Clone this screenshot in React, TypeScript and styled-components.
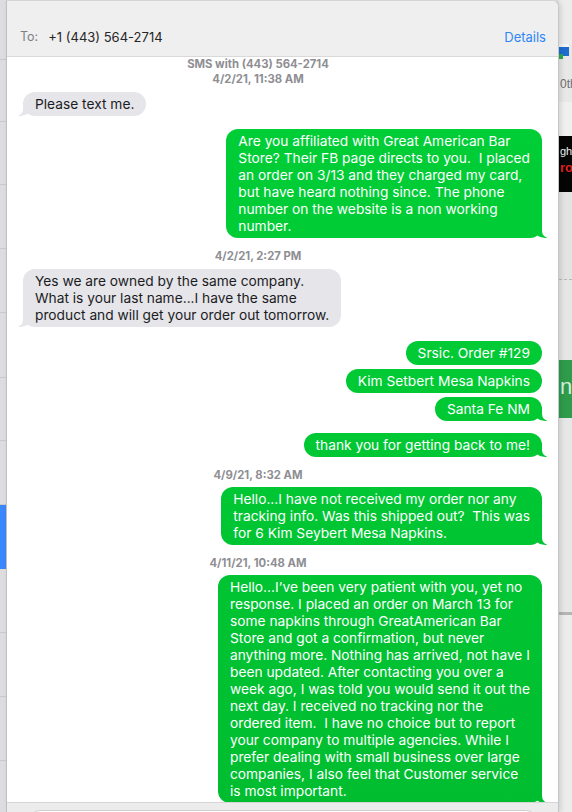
import React from 'react';
import styled, { createGlobalStyle, css } from 'styled-components';

const GlobalStyle = createGlobalStyle`
  html, body {
    margin: 0;
    padding: 0;
    background: #e4e4e6;
  }
  body {
    font-family: Inter, 'Liberation Sans', 'Noto Sans', sans-serif;
    -webkit-font-smoothing: antialiased;
  }
`;

const Screen = styled.div`
  display: flex;
  width: 572px;
  height: 812px;
  overflow: hidden;
`;

const LeftEdge = styled.div`
  width: 6px;
  flex: none;
  display: flex;
  flex-direction: column;
  background: #dddde0;
`;

const LeftCell = styled.div<{ $h: number; $active?: boolean }>`
  height: ${p => p.$h}px;
  flex: none;
  box-sizing: border-box;
  border-bottom: 1px solid ${p => (p.$active ? '#3b87fc' : '#c9c9cc')};
  background: ${p => (p.$active ? '#3b87fc' : 'transparent')};
`;

const Window = styled.div`
  width: 553px;
  flex: none;
  display: flex;
  flex-direction: column;
  box-sizing: border-box;
  background: #ffffff;
  border-left: 1px solid #bfbfc2;
  border-right: 1px solid #c6c6c8;
  border-top: 1px solid #d4d4d4;
  border-top-right-radius: 7px;
  overflow: hidden;
  position: relative;
  z-index: 1;
  box-shadow: 2px 0 5px rgba(0, 0, 0, 0.12);
`;

const Header = styled.div`
  height: 56px;
  flex: none;
  box-sizing: border-box;
  background: #efefef;
  border-bottom: 1px solid #d9d9d9;
  display: flex;
  align-items: flex-end;
  padding: 0 12px 11px 13px;
  font-size: 13px;
  line-height: 16px;
`;

const ToLabel = styled.span`
  color: #7f7f82;
  font-size: 12.5px;
`;

const Recipient = styled.span`
  color: #262626;
  margin-left: 10px;
`;

const DetailsLink = styled.span`
  margin-left: auto;
  color: #2f86f6;
`;

const Messages = styled.div`
  flex: 1;
  min-height: 0;
  overflow: hidden;
  display: flex;
  flex-direction: column;
  padding: 0 16px;
`;

const Stamp = styled.div<{ $top: number; $bottom: number }>`
  margin: ${p => p.$top}px 0 ${p => p.$bottom}px;
  padding-right: 49px;
  text-align: center;
  font-size: 11.3px;
  font-weight: 700;
  line-height: 15px;
  color: #8e8e93;
`;

const Row = styled.div<{ $me?: boolean; $gap: number }>`
  display: flex;
  flex: none;
  justify-content: ${p => (p.$me ? 'flex-end' : 'flex-start')};
  margin-top: ${p => p.$gap}px;
`;

const green = css`
  background: linear-gradient(180deg, #00d037 0%, #00c934 50%, #00bd30 100%) fixed;
`;

const Bubble = styled.div<{ $me?: boolean; $tail?: boolean }>`
  position: relative;
  padding: 4px 12px 3px;
  border-radius: 12px;
  font-size: 13.75px;
  line-height: 17px;
  white-space: pre;
  color: ${p => (p.$me ? '#ffffff' : '#1c1c1e')};
  ${p => (p.$me ? green : css`background: #e5e5ea;`)}

  ${p =>
    p.$tail &&
    (p.$me
      ? css`
          &::before {
            content: '';
            position: absolute;
            bottom: 0;
            right: -5px;
            width: 14px;
            height: 14px;
            background: inherit;
            border-bottom-left-radius: 12px 10px;
          }
          &::after {
            content: '';
            position: absolute;
            bottom: 0;
            right: -16px;
            width: 16px;
            height: 14px;
            background: #ffffff;
            border-bottom-left-radius: 7px;
          }
        `
      : css`
          &::before {
            content: '';
            position: absolute;
            bottom: 0;
            left: -5px;
            width: 14px;
            height: 14px;
            background: #e5e5ea;
            border-bottom-right-radius: 12px 10px;
          }
          &::after {
            content: '';
            position: absolute;
            bottom: 0;
            left: -16px;
            width: 16px;
            height: 14px;
            background: #ffffff;
            border-bottom-right-radius: 7px;
          }
        `)}
`;

const Footer = styled.div`
  height: 10px;
  flex: none;
  box-sizing: border-box;
  background: #ececec;
  border-top: 1px solid #d6d6d6;
  padding: 7px 20px 0 21px;
  overflow: hidden;
`;

const InputField = styled.div`
  height: 24px;
  background: #ffffff;
  border: 1px solid #cfcfcf;
  border-radius: 12px;
`;

const RightEdge = styled.div`
  flex: 1;
  display: flex;
  flex-direction: column;
  background: #e8e8e8;
  overflow: hidden;
  font-family: 'Liberation Sans', sans-serif;
`;

const Block = styled.div<{ $h: number; $bg?: string; $pad?: number }>`
  height: ${p => p.$h}px;
  flex: none;
  box-sizing: border-box;
  padding-top: ${p => p.$pad || 0}px;
  background: ${p => p.$bg || 'transparent'};
  overflow: hidden;
  white-space: nowrap;
`;

const DashedBlock = styled(Block)`
  border-bottom: 1px dashed #b8b8b8;
`;

const EdgeText = styled.div<{ $color: string; $size: number; $bold?: boolean }>`
  color: ${p => p.$color};
  font-size: ${p => p.$size}px;
  font-weight: ${p => (p.$bold ? 700 : 400)};
  line-height: 1.4;
  margin-left: 1px;
`;

type Msg =
  | { kind: 'stamp'; text: string; top: number; bottom: number }
  | { kind: 'bubble'; me?: boolean; tail?: boolean; gap: number; text: string };

const thread: Msg[] = [
  { kind: 'stamp', text: 'SMS with (443) 564-2714\n4/2/21, 11:38 AM', top: 0, bottom: 5 },
  { kind: 'bubble', tail: true, gap: 0, text: 'Please text me.' },
  {
    kind: 'bubble',
    me: true,
    tail: true,
    gap: 13,
    text:
      'Are you affiliated with Great American Bar\nStore? Their FB page directs to you.  I placed\nan order on 3/13 and they charged my card,\nbut have heard nothing since. The phone\nnumber on the website is a non working\nnumber.'
  },
  { kind: 'stamp', text: '4/2/21, 2:27 PM', top: 11, bottom: 5 },
  {
    kind: 'bubble',
    tail: true,
    gap: 0,
    text:
      'Yes we are owned by the same company.\nWhat is your last name...I have the same\nproduct and will get your order out tomorrow.'
  },
  { kind: 'bubble', me: true, gap: 14, text: 'Srsic. Order #129' },
  { kind: 'bubble', me: true, gap: 4, text: 'Kim Setbert Mesa Napkins' },
  { kind: 'bubble', me: true, tail: true, gap: 4, text: 'Santa Fe NM' },
  { kind: 'bubble', me: true, tail: true, gap: 12, text: 'thank you for getting back to me!' },
  { kind: 'stamp', text: '4/9/21, 8:32 AM', top: 11, bottom: 4 },
  {
    kind: 'bubble',
    me: true,
    tail: true,
    gap: 0,
    text:
      'Hello...I have not received my order nor any\ntracking info. Was this shipped out?  This was\nfor 6 Kim Seybert Mesa Napkins.'
  },
  { kind: 'stamp', text: '4/11/21, 10:48 AM', top: 11, bottom: 4 },
  {
    kind: 'bubble',
    me: true,
    tail: true,
    gap: 0,
    text:
      'Hello...I\u2019ve been very patient with you, yet no\nresponse. I placed an order on March 13 for\nsome napkins through GreatAmerican Bar\nStore and got a confirmation, but never\nanything more. Nothing has arrived, not have I\nbeen updated. After contacting you over a\nweek ago, I was told you would send it out the\nnext day. I received no tracking nor the\nordered item.  I have no choice but to report\nyour company to multiple agencies. While I\nprefer dealing with small business over large\ncompanies, I also feel that Customer service\nis most important.'
  }
];

const leftCells = [60, 62, 63, 64, 64, 65, 63, 64];

const AppIcon = () => (
  <svg width="10" height="15" viewBox="0 0 10 15">
    <rect x="0" y="0" width="10" height="4" fill="#f4f4f4" />
    <rect x="0" y="3" width="10" height="9" fill="#1f6cd0" />
    <rect x="0" y="10" width="4" height="5" fill="#2fa84f" />
  </svg>
);

const StampText = ({ text }: { text: string }) => (
  <>
    {text.split('\n').map((line, i) => (
      <div key={i}>{line}</div>
    ))}
  </>
);

const App = () => {
  return (
    <>
      <GlobalStyle />
      <Screen>
        <LeftEdge>
          {leftCells.map((h, i) => (
            <LeftCell key={i} $h={h} />
          ))}
          <LeftCell $h={64} $active />
          <LeftCell $h={64} />
          <LeftCell $h={64} />
          <LeftCell $h={64} />
        </LeftEdge>

        <Window>
          <Header>
            <ToLabel>To:</ToLabel>
            <Recipient>+1 (443) 564-2714</Recipient>
            <DetailsLink>Details</DetailsLink>
          </Header>

          <Messages>
            {thread.map((m, i) =>
              m.kind === 'stamp' ? (
                <Stamp key={i} $top={m.top} $bottom={m.bottom}>
                  <StampText text={m.text} />
                </Stamp>
              ) : (
                <Row key={i} $me={m.me} $gap={m.gap}>
                  <Bubble $me={m.me} $tail={m.tail}>
                    {m.text}
                  </Bubble>
                </Row>
              )
            )}
          </Messages>

          <Footer>
            <InputField />
          </Footer>
        </Window>

        <RightEdge>
          <Block $h={44} $bg="#ececec" />
          <Block $h={18}>
            <AppIcon />
          </Block>
          <Block $h={40} $pad={14}>
            <EdgeText $color="#6e6e6e" $size={12}>0th</EdgeText>
          </Block>
          <Block $h={34} $bg="#f0f0f0" />
          <Block $h={56} $bg="#050505" $pad={8}>
            <EdgeText $color="#f2f2f2" $size={11}>ght</EdgeText>
            <EdgeText $color="#e0201b" $size={13} $bold>ro</EdgeText>
          </Block>
          <DashedBlock $h={88} $bg="#e3e3e3" />
          <Block $h={80} $bg="#e6e6e6" />
          <Block $h={58} $bg="#2e9c4b" $pad={12}>
            <EdgeText $color="#d8efe0" $size={22}>nt</EdgeText>
          </Block>
          <Block $h={194} $bg="#e7e7e7" />
          <Block $h={3} $bg="#b5b5b5" />
          <Block $h={197} $bg="#ececec" />
        </RightEdge>
      </Screen>
    </>
  );
};

export default App;
